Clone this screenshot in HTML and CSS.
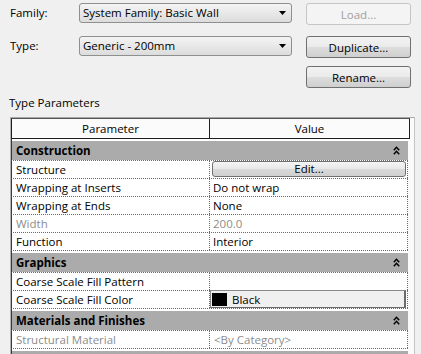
FILE: index.html
```html
<!DOCTYPE html>
<html>
<head>
<meta charset="utf-8">
<link rel="stylesheet" href="styles.css">
</head>
<body>
<div class="form">
  <div class="frow frow1">
    <span class="label">Family:</span>
    <div class="combo"><span>System Family: Basic Wall</span><svg class="arrow" width="7" height="4" viewBox="0 0 7 4"><path d="M0 0 H7 L3.5 4 Z" fill="#000"/></svg></div>
    <button class="btn disabled">Load...</button>
  </div>
  <div class="frow frow2">
    <span class="label">Type:</span>
    <div class="combo"><span>Generic - 200mm</span><svg class="arrow" width="7" height="4" viewBox="0 0 7 4"><path d="M0 0 H7 L3.5 4 Z" fill="#000"/></svg></div>
    <button class="btn">Duplicate...</button>
  </div>
  <div class="frow frow3">
    <button class="btn">Rename...</button>
  </div>
</div>
<div class="section-title">Type Parameters</div>
<div class="frame">
  <div class="head">
    <div class="hcell hc1">Parameter</div>
    <div class="hcell">Value</div>
  </div>

  <div class="group"><div class="gbar"><span>Construction</span><svg class="chev" width="7" height="9" viewBox="0 0 7 9"><path d="M0.8 4.2 L3.5 1.3 L6.2 4.2 M0.8 8.2 L3.5 5.3 L6.2 8.2" fill="none" stroke="#000" stroke-width="1.5"/></svg></div></div>
  <div class="drow"><div class="c1">Structure</div><div class="c2"><button class="edit">Edit...</button></div></div>
  <div class="drow"><div class="c1">Wrapping at Inserts</div><div class="c2">Do not wrap</div></div>
  <div class="drow"><div class="c1">Wrapping at Ends</div><div class="c2">None</div></div>
  <div class="drow dim"><div class="c1">Width</div><div class="c2">200.0</div></div>
  <div class="drow"><div class="c1">Function</div><div class="c2">Interior</div></div>

  <div class="group"><div class="gbar"><span>Graphics</span><svg class="chev" width="7" height="9" viewBox="0 0 7 9"><path d="M0.8 4.2 L3.5 1.3 L6.2 4.2 M0.8 8.2 L3.5 5.3 L6.2 8.2" fill="none" stroke="#000" stroke-width="1.5"/></svg></div></div>
  <div class="drow"><div class="c1">Coarse Scale Fill Pattern</div><div class="c2"></div></div>
  <div class="drow"><div class="c1">Coarse Scale Fill Color</div><div class="c2"><div class="colorbox"><span class="swatch"></span>Black</div></div></div>

  <div class="group"><div class="gbar"><span>Materials and Finishes</span><svg class="chev" width="7" height="9" viewBox="0 0 7 9"><path d="M0.8 4.2 L3.5 1.3 L6.2 4.2 M0.8 8.2 L3.5 5.3 L6.2 8.2" fill="none" stroke="#000" stroke-width="1.5"/></svg></div></div>
  <div class="drow dim"><div class="c1">Structural Material</div><div class="c2 cat">&lt;By Category&gt;</div></div>
  <div class="group"><div class="gbar"><span></span></div></div>
</div>
</body>
</html>
```

FILE: styles.css
```css
* { box-sizing: border-box; }
html, body { margin: 0; padding: 0; }
body {
  width: 421px;
  height: 354px;
  overflow: hidden;
  background: #f0f0f0;
  font-family: "Open Sans", "Noto Sans", sans-serif;
  font-size: 11.5px;
  color: #000;
}
.form { padding: 3px 0 0 9px; }
.frow {
  display: grid;
  grid-template-columns: 70px 213px 14px 105px;
  align-items: start;
  height: 22px;
}
.frow .btn { grid-column: 4; }
.frow2 { margin-top: 11px; }
.frow3 { margin-top: 8px; }
.label { line-height: 20px; padding-left: 1px; }
.combo {
  height: 20px;
  border: 1px solid #8e8f8f;
  border-radius: 3px;
  background: linear-gradient(#f4f4f4, #e8e8e8 50%, #dcdcdc);
  display: flex;
  align-items: center;
  justify-content: space-between;
  padding: 0 5px 0 3px;
  line-height: 18px;
}
.arrow { display: block; }
.btn {
  height: 22px;
  border: 1px solid #707070;
  border-radius: 3px;
  background: linear-gradient(#f2f2f2, #ebebeb 50%, #dddddd 51%, #cfcfcf);
  font-family: inherit;
  font-size: inherit;
  color: #000;
  padding: 0;
  margin: 0;
}
.btn.disabled {
  border-color: #c5c5c5;
  background: #f4f4f4;
  color: #a0a0a0;
}
.section-title {
  margin-top: 7px;
  padding-left: 9px;
  line-height: 16px;
  height: 16px;
}
.frame {
  margin-top: 6px;
  margin-left: 10px;
  width: 405px;
  height: 240px;
  border-left: 1px solid #b4b4b4;
  border-right: 1px solid #c4c4c4;
  border-top: 1px solid #a8a8a8;
  background: #fafafa;
  overflow: hidden;
}
.head {
  display: grid;
  grid-template-columns: 198px 1fr;
  width: 399px;
  height: 21px;
  border: 1px solid #1e1e1e;
  border-top-color: #555;
  background: #fbfbfb;
  line-height: 19px;
  text-align: center;
}
.hc1 { border-right: 1px solid #1e1e1e; }
.group {
  width: 397px;
  height: 22px;
  border-left: 1px solid #3a3a3a;
  padding-top: 2px;
  background: #fff;
  border-bottom: 1px dotted #6a6a6a;
}
.gbar {
  height: 19px;
  background: #ababab;
  display: flex;
  justify-content: space-between;
  align-items: center;
  padding: 0 8px 0 4px;
  font-weight: bold;
  line-height: 19px;
}
.chev { display: block; }
.drow {
  display: grid;
  grid-template-columns: 198px 198px;
  width: 397px;
  height: 18px;
  border-left: 1px solid #3a3a3a;
  border-bottom: 1px dotted #6a6a6a;
  background: #fff;
  line-height: 17px;
}
.c1 { padding-left: 4px; border-right: 1px dotted #6a6a6a; white-space: nowrap; }
.c2 { padding-left: 3px; border-right: 1px dotted #6a6a6a; white-space: nowrap; }
.dim { color: #8c8c8c; }
.cat { padding-left: 4px; }
.edit {
  display: block;
  width: 194px;
  height: 16px;
  margin: 0 0 0 -1px;
  padding: 0;
  border: 1px solid #707070;
  border-radius: 3px;
  background: linear-gradient(#f4f4f4, #e8e8e8 50%, #d9d9d9 51%, #d0d0d0);
  font-family: inherit;
  font-size: inherit;
  line-height: 14px;
  color: #000;
}
.colorbox {
  display: flex;
  align-items: center;
  margin-left: -3px;
  width: 196px;
  height: 18px;
  margin-top: -1px;
  border: 1px solid #8a8a8a;
  border-right: 2px solid #6a6a6a;
  border-bottom: 1px solid #6a6a6a;
  background: #f0f0f0;
  padding-left: 1px;
}
.swatch {
  display: inline-block;
  width: 15px;
  height: 13px;
  background: #000;
  margin-right: 5px;
}
```
